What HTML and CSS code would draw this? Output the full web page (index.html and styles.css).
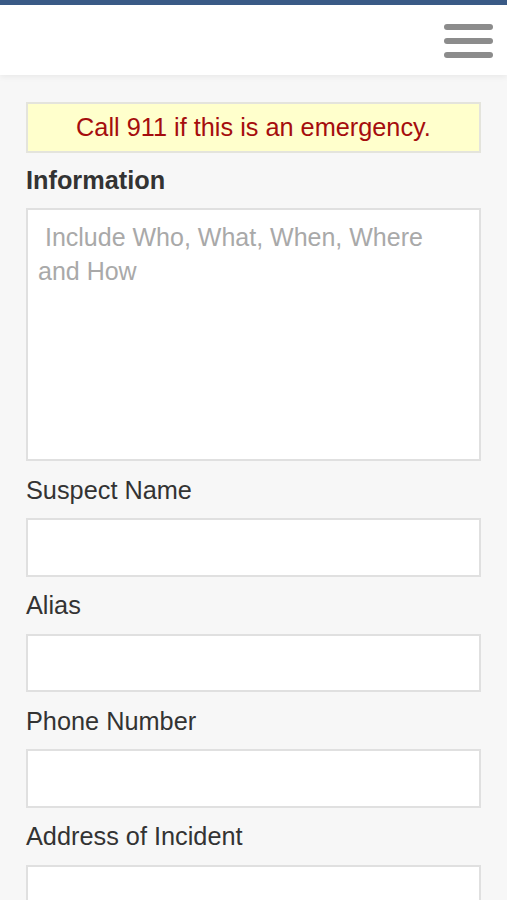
FILE: index.html
```html
<!DOCTYPE html>
<html>
<head>
<meta charset="utf-8">
<link rel="stylesheet" href="styles.css">
</head>
<body>
<header class="topbar">
  <button class="menu-btn" aria-label="Menu">
    <svg width="50" height="36" viewBox="0 0 50 36">
      <g stroke="#8c8c8c" stroke-width="6" stroke-linecap="round">
        <line x1="3" y1="4" x2="46" y2="4"/>
        <line x1="3" y1="18" x2="46" y2="18"/>
        <line x1="3" y1="32" x2="46" y2="32"/>
      </g>
    </svg>
  </button>
</header>
<main class="content">
  <div class="alert">Call 911 if this is an emergency.</div>
  <label class="label label-bold" for="info">Information</label>
  <textarea id="info" class="textarea" placeholder=" Include Who, What, When, Where and How"></textarea>
  <label class="label" for="suspect">Suspect Name</label>
  <input id="suspect" class="input" type="text">
  <label class="label" for="alias">Alias</label>
  <input id="alias" class="input" type="text">
  <label class="label" for="phone">Phone Number</label>
  <input id="phone" class="input" type="text">
  <label class="label" for="address">Address of Incident</label>
  <input id="address" class="input" type="text">
</main>
</body>
</html>
```

FILE: styles.css
```css
* { box-sizing: border-box; }
html, body {
  margin: 0;
  padding: 0;
  background: #f7f7f7;
  font-family: "Liberation Sans", Arial, Helvetica, sans-serif;
}
.topbar {
  height: 75px;
  background: #ffffff;
  border-top: 5px solid #3a5a86;
  box-shadow: 0 2px 6px rgba(0,0,0,0.06);
  display: flex;
  justify-content: flex-end;
  align-items: center;
  padding-right: 13px;
  position: relative;
}
.menu-btn {
  background: none;
  border: 0;
  padding: 0;
  margin-top: 2px;
  display: block;
}
.menu-btn svg { display: block; }
.content {
  display: flex;
  flex-direction: column;
  padding: 27px 26px 0;
}
.alert {
  height: 51px;
  background: #ffffcc;
  border: 2px solid #e4e4dc;
  color: #a50d0d;
  font-size: 25.3px;
  line-height: 47px;
  text-align: center;
}
.label {
  display: block;
  font-size: 25.3px;
  line-height: 28px;
  color: #333333;
  padding: 14.5px 0 14.5px;
}
.label-bold {
  font-weight: bold;
  padding: 13px 0 14px;
}
.textarea, .input {
  display: block;
  width: 100%;
  background: #ffffff;
  border: 2px solid #e0e0e0;
  border-radius: 0;
  margin: 0;
  font-family: inherit;
  font-size: 25px;
  color: #333;
  outline: none;
}
.textarea {
  height: 253px;
  resize: none;
  padding: 10px 10px;
  line-height: 34px;
}
.textarea::placeholder { color: #a9a9a9; }
.input {
  height: 58.5px;
  padding: 0 10px;
}
```
